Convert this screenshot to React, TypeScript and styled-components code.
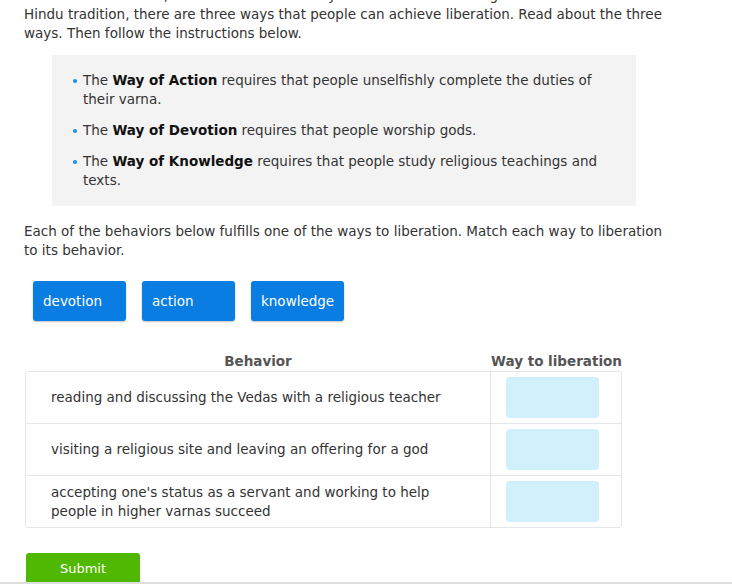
import React from "react";
import styled, { createGlobalStyle } from "styled-components";

const Global = createGlobalStyle`
  html, body { margin: 0; padding: 0; background: #fff; overflow: hidden; }
  body { font-family: "DejaVu Sans", Verdana, sans-serif; color: #333; font-size: 13.5px; }
`;

const Page = styled.div`
  padding: 0 24px;
  width: 732px;
  box-sizing: border-box;
`;

const Para = styled.p<{ $top?: number }>`
  margin: ${(p) => p.$top ?? 0}px 0 0 0;
  font-size: 13.5px;
  line-height: 19px;
  width: 648px;
`;

const InfoBox = styled.div`
  margin: 12px 0 0 28px;
  width: 584px;
  background: #f3f3f3;
  border-radius: 2px;
  padding: 16px 20px 16px 0;
  box-sizing: border-box;
`;

const List = styled.ul`
  margin: 0;
  padding: 0 0 0 31px;
  list-style: none;
`;

const Item = styled.li`
  position: relative;
  font-size: 13.5px;
  line-height: 19px;
  margin-top: 12px;
  &:first-child { margin-top: 0; }
  &::before {
    content: "";
    position: absolute;
    left: -10px;
    top: 8px;
    width: 4px;
    height: 4px;
    border-radius: 50%;
    background: #1a8ce8;
  }
  b { color: #111; }
`;

const Bank = styled.div`
  display: flex;
  gap: 16px;
  margin: 21px 0 0 9px;
`;

const Chip = styled.button`
  min-width: 93px;
  height: 40px;
  padding: 0 10px;
  box-sizing: border-box;
  border: none;
  border-radius: 3px;
  background: #0a7de2;
  color: #fff;
  font-family: "DejaVu Sans", Verdana, sans-serif;
  font-size: 13.5px;
  text-align: left;
  box-shadow: 0 1px 2px rgba(0, 0, 0, 0.25);
`;

const Matcher = styled.div`
  margin: 31px 0 0 1px;
  width: 597px;
`;

const HeaderRow = styled.div`
  display: grid;
  grid-template-columns: 466px 131px;
`;

const HeaderCell = styled.div`
  text-align: center;
  white-space: nowrap;
  font-weight: bold;
  font-size: 13.5px;
  line-height: 19px;
  color: #555;
`;

const Table = styled.div`
  border: 1px solid #e5e5e5;
  border-radius: 3px;
`;

const Row = styled.div`
  display: grid;
  grid-template-columns: 465px 130px;
  height: 51px;
  border-top: 1px solid #e5e5e5;
  &:first-child { border-top: none; }
`;

const Behavior = styled.div`
  display: flex;
  align-items: center;
  padding: 0 20px 0 25px;
  font-size: 13.5px;
  line-height: 19px;
  border-right: 1px solid #e5e5e5;
`;

const DropCell = styled.div`
  display: flex;
  align-items: center;
  padding-left: 15px;
`;

const Drop = styled.div`
  width: 93px;
  height: 41px;
  border-radius: 4px;
  background: #d0f0fc;
`;

const Submit = styled.button`
  margin: 25px 0 0 2px;
  width: 114px;
  height: 31px;
  border: none;
  border-radius: 3px;
  background: #50b800;
  color: #fff;
  font-family: "DejaVu Sans", Verdana, sans-serif;
  font-size: 13px;
`;

const Footer = styled.div`
  position: fixed;
  left: 0;
  right: 0;
  bottom: 0;
  height: 2px;
  background: #dedede;
`;

const rows = [
  "reading and discussing the Vedas with a religious teacher",
  "visiting a religious site and leaving an offering for a god",
  "accepting one's status as a servant and working to help people in higher varnas succeed",
];

export default function App() {
  return (
    <>
      <Global />
      <Page>
        <Para $top={-14}>
          Hindus seek moksha, or liberation from the cycle of rebirth. According to the
          <br />
          Hindu tradition, there are three ways that people can achieve liberation. Read about the three ways. Then
          follow the instructions below.
        </Para>
        <InfoBox>
          <List>
            <Item>
              The <b>Way of Action</b> requires that people unselfishly complete the duties of their varna.
            </Item>
            <Item>
              The <b>Way of Devotion</b> requires that people worship gods.
            </Item>
            <Item>
              The <b>Way of Knowledge</b> requires that people study religious teachings and texts.
            </Item>
          </List>
        </InfoBox>
        <Para $top={16}>
          Each of the behaviors below fulfills one of the ways to liberation. Match each way to liberation to its
          behavior.
        </Para>
        <Bank>
          <Chip>devotion</Chip>
          <Chip>action</Chip>
          <Chip>knowledge</Chip>
        </Bank>
        <Matcher>
          <HeaderRow>
            <HeaderCell>Behavior</HeaderCell>
            <HeaderCell>Way to liberation</HeaderCell>
          </HeaderRow>
          <Table>
            {rows.map((r) => (
              <Row key={r}>
                <Behavior>{r}</Behavior>
                <DropCell>
                  <Drop />
                </DropCell>
              </Row>
            ))}
          </Table>
        </Matcher>
        <Submit>Submit</Submit>
      </Page>
      <Footer />
    </>
  );
}
